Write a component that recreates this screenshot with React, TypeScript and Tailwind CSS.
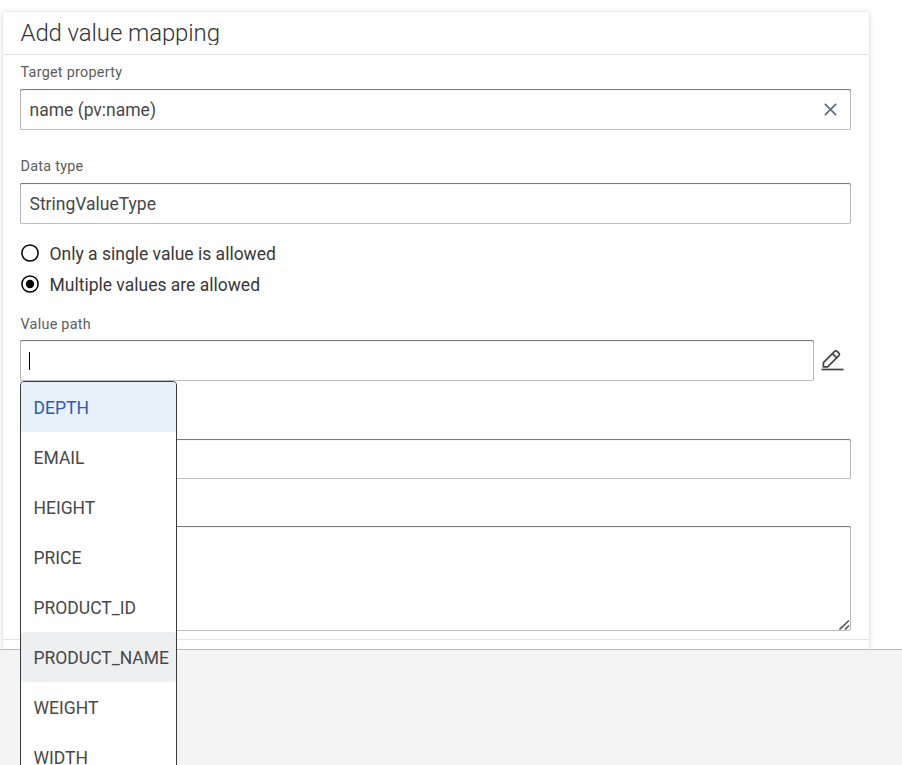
import type { ReactNode } from "react";

const paths = ["DEPTH", "EMAIL", "HEIGHT", "PRICE", "PRODUCT_ID", "PRODUCT_NAME", "WEIGHT", "WIDTH"];

const field =
  "rounded-[2px] bg-white shadow-[inset_0_0_0_1px_rgba(0,0,0,0.25),inset_0_1px_1px_rgba(0,0,0,0.4)]";

function Label({ children }: { children: ReactNode }) {
  return <div className="h-5 pt-px pl-[0.5px] text-[14.4px] leading-5 tracking-[0.26px] text-[#5c5c5c]">{children}</div>;
}

function Radio({ label, checked = false }: { label: string; checked?: boolean }) {
  return (
    <div className="flex h-[31px] items-center gap-[10.5px] pl-px">
      <svg className="mb-px size-[18px]" viewBox="0 0 18 18">
        <circle cx="9" cy="9" r="8.1" fill="none" stroke="#000" strokeWidth="1.5" />
        {checked && <circle cx="9" cy="9" r="4.2" />}
      </svg>
      <span className="text-[17.5px] leading-6 text-[#383838]">{label}</span>
    </div>
  );
}

function PathMenu() {
  return (
    <ul className="absolute top-[41px] left-0 z-10 h-[420px] w-[157px] rounded-[4px] border border-[#393939] bg-white">
      {paths.map((p) => (
        <li
          key={p}
          className={
            "flex h-[50px] items-center rounded-[3px] pt-[2px] pl-[12.5px] text-[17.5px] " +
            (p === "DEPTH"
              ? "bg-[#e8f0fa] text-[#2a5db0]"
              : p === "PRODUCT_NAME"
                ? "bg-[#edeff1] text-[#484848]"
                : "text-[#484848]")
          }
        >
          {p}
        </li>
      ))}
    </ul>
  );
}

export default function App() {
  return (
    <div className="h-[765px] overflow-hidden bg-white font-[Roboto,sans-serif]">
      <main className="h-[649px] bg-white pt-3 pl-[3px]">
        <section className="h-[637px] w-[866px] bg-white shadow-[0_0_0_1px_rgba(0,0,0,0.03),0_1px_6px_rgba(0,0,0,0.15)]">
          <header className="h-[43px] border-b border-[#e0e0e0] pl-[17.5px]">
            <h1 className="h-[33px] overflow-hidden text-[24px] leading-[42px] font-light tracking-[-0.11px] text-[#333]">
              Add value mapping
            </h1>
          </header>
          <div className="flex h-[585px] flex-col border-b border-[#e4e4e4] pt-[7px] pr-[18px] pl-[17px]">
            <Label>Target property</Label>
            <div className={field + " mt-[7px] flex h-[41px] items-center justify-between pr-[14px] pl-[9.5px]"}>
              <span className="pt-[2px] text-[17.5px] text-[#484848]">name (pv:name)</span>
              <svg className="size-[13px]" viewBox="0 0 13 13" fill="none" stroke="#5f6b7c" strokeWidth="1.7">
                <path d="M.8.8l11.4 11.4M12.2.8L.8 12.2" />
              </svg>
            </div>
            <div className="mt-[26px]">
              <Label>Data type</Label>
            </div>
            <div className={field + " mt-[7px] flex h-[41px] items-center pt-[2px] pl-[9.5px] text-[17.5px] text-[#484848]"}>
              StringValueType
            </div>
            <div className="mt-[14px]">
              <Radio label="Only a single value is allowed" />
              <Radio label="Multiple values are allowed" checked />
            </div>
            <div className="mt-[14px]">
              <Label>Value path</Label>
            </div>
            <div className="relative mt-[6px] flex h-[41px] items-center">
              <div className={field + " flex h-[41px] w-[794px] items-center pl-[9px]"}>
                <span className="h-[18px] w-px bg-black" />
              </div>
              <svg className="mb-[2px] ml-[6px] h-6 w-6" viewBox="0 0 24 24" fill="none" stroke="#444" strokeWidth="1.7">
                <path d="M1.5 21.5h22" />
                <path d="M3.4 18.8v-4.2L14.6 3.4a1.8 1.8 0 0 1 2.5 0l1.8 1.8a1.8 1.8 0 0 1 0 2.5L7.6 18.8zM12.4 5.6l4.3 4.3" />
              </svg>
              <PathMenu />
            </div>
            <div className={field + " mt-[58px] h-10"} />
            <div className={field + " mt-[47px] flex h-[105px] items-end justify-end p-px"}>
              <svg className="size-[11px]" viewBox="0 0 11 11" fill="none" stroke="#555" strokeWidth="1.6">
                <path d="M.5 10.5l9.5-9M6 10.5l4-4" />
              </svg>
            </div>
          </div>
        </section>
      </main>
      <footer className="relative z-[1] h-[116px] border-t border-[#b8b8b8] bg-[#f4f4f4]" />
    </div>
  );
}
